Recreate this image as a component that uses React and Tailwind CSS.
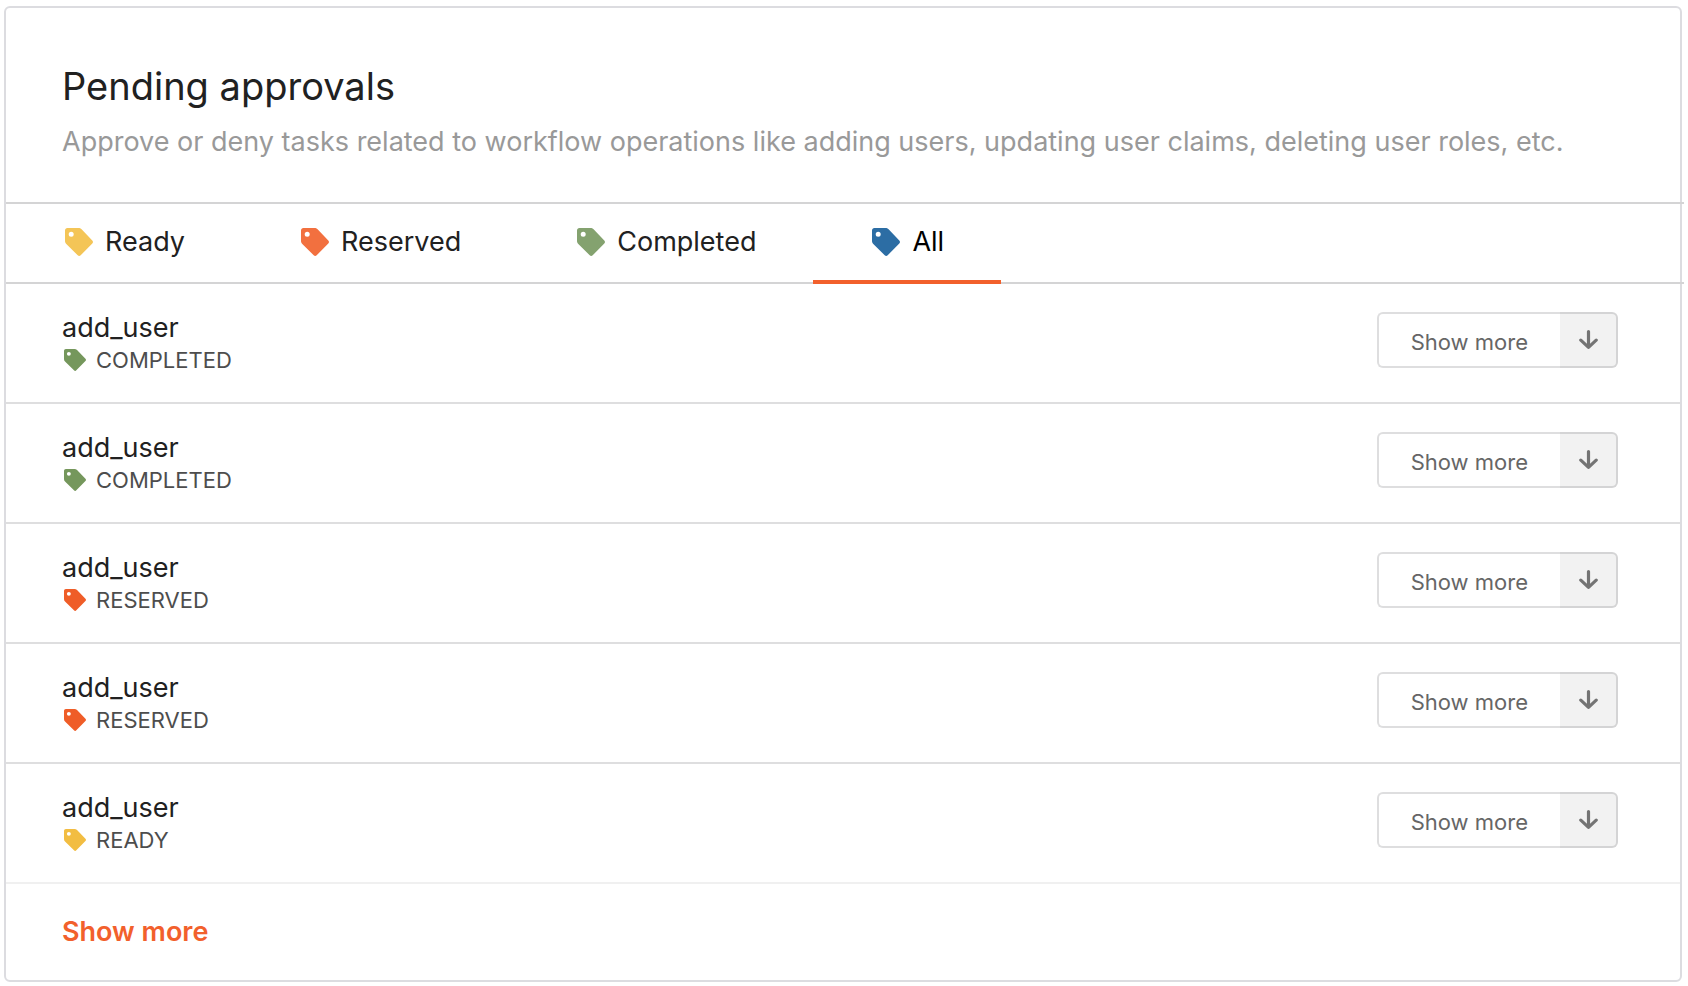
import { useState } from "react";

const tabs = [
  { label: "Ready", tone: "text-[#f4c557]" },
  { label: "Reserved", tone: "text-[#f2703f]" },
  { label: "Completed", tone: "text-[#84a26f]" },
  { label: "All", tone: "text-[#2c6da4]" },
];

const statusTone = {
  COMPLETED: "text-[#75975c]",
  RESERVED: "text-[#ef5d28]",
  READY: "text-[#f2bd42]",
};

const approvals = [
  { id: 1, name: "add_user", status: "COMPLETED" },
  { id: 2, name: "add_user", status: "COMPLETED" },
  { id: 3, name: "add_user", status: "RESERVED" },
  { id: 4, name: "add_user", status: "RESERVED" },
  { id: 5, name: "add_user", status: "READY" },
];

function TagIcon({ className }) {
  return (
    <svg viewBox="0 0 28 28" fill="currentColor" aria-hidden="true" className={className}>
      <path
        fillRule="evenodd"
        d="M2.4 0H13.4C14.7 0 15.7.4 16.6 1.3L27.3 12.4C28.2 13.4 28.2 14.4 27.3 15.4L15.7 27.2C14.8 28.2 13.6 28.2 12.7 27.2L1.3 16C.4 15.1 0 14.1 0 12.8V2.4C0 1 1 0 2.4 0ZM6.2 3.7A2.5 2.5 0 1 0 6.2 8.7A2.5 2.5 0 1 0 6.2 3.7Z"
      />
    </svg>
  );
}

function ArrowDownIcon() {
  return (
    <svg
      viewBox="0 0 20 20"
      fill="none"
      stroke="currentColor"
      strokeWidth="3.2"
      strokeLinecap="round"
      strokeLinejoin="round"
      aria-hidden="true"
      className="size-5"
    >
      <path d="M10.5 1.6V17.2M2.8 10.2L10.5 17.4L18.2 10.2" />
    </svg>
  );
}

export default function App() {
  const [active, setActive] = useState("All");

  return (
    <main className="bg-white pt-1.5 pr-1.5 pb-1 pl-1 font-['Inter',sans-serif] text-[#212121]">
      <section className="rounded-md border-2 border-[#dcdce0]">
        <header className="px-14 pt-[54px] pb-10">
          <h1 className="text-[38px] leading-12">Pending approvals</h1>
          <p className="mt-3 text-[27px] leading-10 text-[#999999]">
            Approve or deny tasks related to workflow operations like adding users, updating user
            claims, deleting user roles, etc.
          </p>
        </header>

        <nav className="-mr-1 flex border-y-2 border-[#d4d4d5]">
          {tabs.map(({ label, tone }) => (
            <button
              key={label}
              type="button"
              aria-pressed={active === label}
              onClick={() => setActive(label)}
              className={`-mb-0.5 flex h-20 items-center gap-3 border-b-4 pr-[57px] pl-[59px] text-[27px] ${
                active === label ? "border-[#f2602c] text-black" : "border-transparent"
              }`}
            >
              <TagIcon className={`size-7 ${tone}`} />
              {label}
            </button>
          ))}
        </nav>

        <ul className="divide-y-2 divide-[#dededf]">
          {approvals.map(({ id, name, status }) => (
            <li key={id} className="flex items-start justify-between pt-7 pr-[62px] pb-[30px] pl-14">
              <div>
                <h2 className="text-[27px] leading-8">{name}</h2>
                <p className="mt-1 flex items-center gap-2.5 pl-0.5 text-[22px] leading-6 text-[#4d4d4d]">
                  <TagIcon className={`size-[22px] ${statusTone[status]}`} />
                  {status}
                </p>
              </div>
              <button type="button" className="flex h-14 text-[22px] text-[#666666]">
                <span className="flex h-full items-center rounded-l-md border-2 border-r-0 border-[#dededf] px-8 pt-1">
                  Show more
                </span>
                <span className="flex h-full w-[58px] items-center justify-center rounded-r-md border-2 border-l-0 border-[#d4d4d5] bg-[#f2f2f2] text-[#747474]">
                  <ArrowDownIcon />
                </span>
              </button>
            </li>
          ))}
        </ul>

        <footer className="border-t-2 border-[#f0f0f0] px-14 py-7">
          <button type="button" className="block text-[27px] leading-10 font-semibold text-[#f2602c]">
            Show more
          </button>
        </footer>
      </section>
    </main>
  );
}
